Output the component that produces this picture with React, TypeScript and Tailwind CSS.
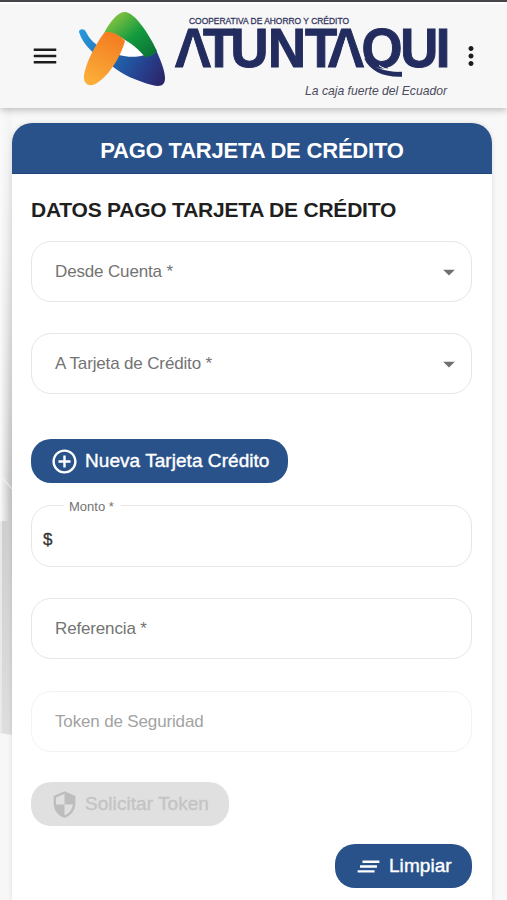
import type { ReactNode } from "react";
import { MdAddCircleOutline, MdArrowDropDown, MdClearAll, MdMenu, MdMoreVert, MdSecurity } from "react-icons/md";

function Logo() {
  return (
    <svg className="w-[380px] h-[104px] shrink-0 overflow-visible" viewBox="74 4 380 104" fontFamily="'Liberation Sans', Arial, sans-serif">
      <defs>
        <linearGradient id="green" x1="0" y1="0" x2="1" y2="1">
          <stop offset="0.1" stopColor="#8cc63f" />
          <stop offset="0.55" stopColor="#139a3f" />
          <stop offset="1" stopColor="#0a6b34" />
        </linearGradient>
        <linearGradient id="orange" x1="0.7" y1="0" x2="0.3" y2="1">
          <stop offset="0" stopColor="#f47b20" />
          <stop offset="1" stopColor="#fbae38" />
        </linearGradient>
        <linearGradient id="blue" x1="78" y1="30" x2="165" y2="80" gradientUnits="userSpaceOnUse">
          <stop offset="0" stopColor="#2a9be0" />
          <stop offset="0.45" stopColor="#1f68b0" />
          <stop offset="0.75" stopColor="#26418f" />
          <stop offset="1" stopColor="#2b2467" />
        </linearGradient>
      </defs>
      {/* Ribbon mark */}
      <path d="M118 54 Q132 59 146 57 L126 38 Z" fill="#ffffff" />
      <path
        d="M79 32 C79 29 84 28 86 32 C89 38 92 41 97 45 C104 50 111 53 119 55 C130 58 143 58 156 50 C161 61 165 71 165 78 C165 86 160 87 152 85 C137 81 123 75 112 66 C96 56 83 46 79 32 Z"
        fill="url(#blue)"
      />
      <path d="M104 33 C111 20 118 12 125 12 C134 12 148 32 157 51 C154 55 150 57 145 57 C141 52 134 45 125 40 C119 36 112 32 104 33 Z" fill="url(#green)" />
      <path d="M104 33 C110 30 119 34 125 41 C121 56 109 76 97 83 C89 88 83 84 84 75 C86 63 95 45 104 33 Z" fill="url(#orange)" />

      <text x="189" y="24" fontSize="9.6" textLength="160" lengthAdjust="spacingAndGlyphs" fill="#33365f" stroke="#33365f" strokeWidth="0.3">
        COOPERATIVA DE AHORRO Y CRÉDITO
      </text>
      <g transform="translate(174 0) scale(0.94 1)">
        <text x="0 30.9 60.1 100 139.4 162.8 199.5 240.7 278.5" y="67.2" fontSize="56" fontWeight="700" fill="#232c5e" stroke="#232c5e" strokeWidth="1">
          ATUNTAQUI
        </text>
      </g>
      {/* Opens both A letters and gives the Q its sweeping tail */}
      <path d="M182.8 68.5 L193 36.5 L203.4 68.5 Z M335.8 68.5 L346 36.5 L356.4 68.5 Z" fill="#f7f7f7" />
      <rect x="374" y="68.5" width="32" height="14" fill="#f7f7f7" />
      <path d="M365 58 C373 68 386 72.5 402 71.5 V76.7 C384 77.5 370 71 364.5 59 Z" fill="#232c5e" />
      <path d="M379 65.5 C386 70 394 71.5 403 71" fill="none" stroke="#f7f7f7" strokeWidth="1" />
      <text x="305" y="95" fontSize="13" fontStyle="italic" textLength="142" lengthAdjust="spacingAndGlyphs" fill="#4b4b5c">
        La caja fuerte del Ecuador
      </text>
    </svg>
  );
}

function Field({ label, select, disabled }: { label: string; select?: boolean; disabled?: boolean }) {
  return (
    <div
      className={`flex items-center justify-between h-[61px] pl-[23px] pr-[8px] rounded-[20px] border-[1.5px] ${
        disabled ? "border-[#f3f3f3] text-[#a3a3a3]" : "border-[#e6e6e6] text-[#737373]"
      }`}
    >
      <span className="text-[17px] tracking-[-0.15px]">{label}</span>
      {select && <MdArrowDropDown className="size-[28px] text-[#707070]" />}
    </div>
  );
}

function PillButton({ icon, children, className }: { icon: ReactNode; children: ReactNode; className: string }) {
  return (
    <button className={`flex items-center h-[44px] rounded-[20px] text-[19px] tracking-[0.05px] whitespace-nowrap [-webkit-text-stroke:0.4px] ${className}`}>
      {icon}
      {children}
    </button>
  );
}

export default function App() {
  return (
    <div className="flex flex-col w-[507px] h-[900px] overflow-hidden bg-[#f8f8f8] font-['Liberation_Sans',Arial,sans-serif]">
      <div className="h-[2px] shrink-0 bg-[#4b494d]" />
      <header className="relative flex items-center h-[106px] shrink-0 bg-[#f7f7f7] border-t-2 border-white shadow-[0_2px_7px_rgba(0,0,0,0.25)]">
        <MdMenu className="size-[30px] ml-[30px] mr-[14px] text-[#1c1c1c]" />
        <Logo />
        <MdMoreVert className="size-[30px] ml-[2px] text-[#1c1c1c]" />
      </header>

      <div className="flex flex-1 min-h-0">
        {/* Left edge of the page backdrop */}
        <svg className="w-[12px] h-[792px] shrink-0" viewBox="0 108 12 792">
          <defs>
            <linearGradient id="edge" x1="0" y1="0" x2="0" y2="1">
              <stop offset="0" stopColor="#f6f6f6" />
              <stop offset="0.25" stopColor="#e8e8e8" />
              <stop offset="0.6" stopColor="#cccccc" />
              <stop offset="1" stopColor="#dedede" />
            </linearGradient>
            <linearGradient id="fade" x1="0" y1="0" x2="1" y2="0">
              <stop offset="0" stopColor="#fafafa" />
              <stop offset="1" stopColor="#fafafa" stopOpacity="0" />
            </linearGradient>
          </defs>
          <rect x="0" y="108" width="12" height="792" fill="#f7f7f7" />
          <path d="M0 108 H12 V735 L0 733 Z" fill="url(#edge)" />
          <rect x="0" y="108" width="9" height="413" fill="url(#fade)" />
          <rect x="0" y="521" width="2" height="212" fill="#e9e9e9" />
          <path d="M0 475 L12 489" stroke="#f5f5f5" strokeWidth="1" />
        </svg>

        <main className="flex flex-col w-[480px] mt-[15px] rounded-t-[20px] bg-white shadow-[0_0_5px_rgba(0,0,0,0.12)]">
          <div className="flex items-center justify-center h-[51px] shrink-0 pt-[5px] rounded-t-[20px] bg-[#29518a] border-b border-[#21447a]">
            <h1 className="text-[22px] font-bold tracking-[-0.2px] text-white whitespace-nowrap">PAGO TARJETA DE CRÉDITO</h1>
          </div>

          <div className="flex flex-col pl-[19px] pr-[20px]">
            <h2 className="h-[67px] pt-[20px] text-[21px] font-bold tracking-[-0.22px] text-[#1f1f1f] whitespace-nowrap">DATOS PAGO TARJETA DE CRÉDITO</h2>
            <div className="flex flex-col gap-[31px]">
              <Field label="Desde Cuenta *" select />
              <Field label="A Tarjeta de Crédito *" select />
            </div>

            <PillButton
              className="mt-[45px] w-[257px] pl-[19px] gap-[6px] bg-[#29518a] text-white"
              icon={<MdAddCircleOutline className="size-[29px]" />}
            >
              Nueva Tarjeta Crédito
            </PillButton>

            <fieldset className="h-[68px] mt-[16px] px-[11px] rounded-[20px] border-[1.5px] border-[#e6e6e6]">
              <legend className="ml-[21px] pl-[5px] pr-[7px] text-[13px] leading-[13px] text-[#737373]">
                <span className="relative top-px">Monto *</span>
              </legend>
              <span className="block pt-[15px] text-[17px] text-[#333333] [-webkit-text-stroke:0.3px]">$</span>
            </fieldset>

            <div className="flex flex-col gap-[32px] mt-[31px]">
              <Field label="Referencia *" />
              <Field label="Token de Seguridad" disabled />
            </div>

            <PillButton
              className="mt-[30px] w-[198px] pl-[19px] gap-[6px] bg-[#e0e0e0] text-[#c4c4c4]"
              icon={<MdSecurity className="size-[29px] text-[#bdbdbd]" />}
            >
              Solicitar Token
            </PillButton>
            <PillButton
              className="self-end mt-[18px] w-[137px] pl-[19px] gap-[6px] bg-[#29518a] text-white"
              icon={<MdClearAll className="size-[29px]" />}
            >
              Limpiar
            </PillButton>
          </div>
        </main>
      </div>
    </div>
  );
}
